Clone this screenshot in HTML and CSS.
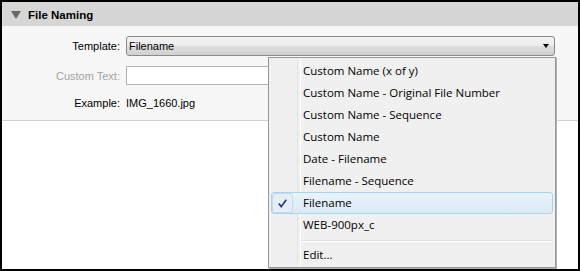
FILE: index.html
```html
<!DOCTYPE html>
<html lang="en">
<head>
  <meta charset="UTF-8">
  <title>File Naming</title>
  <link rel="stylesheet" href="styles.css">
</head>
<body>
  <div class="panel">
    <div class="panel-header">
      <span class="disclosure"></span>
      <span class="panel-title">File Naming</span>
    </div>

    <div class="panel-body">
      <div class="form-grid">
        <label class="field-label">Template:</label>
        <div class="select">
          <span>Filename</span>
          <span class="select-arrow"></span>
        </div>

        <label class="field-label disabled">Custom Text:</label>
        <div class="text-input"></div>

        <label class="field-label">Example:</label>
        <div class="example">IMG_1660.jpg</div>
      </div>
    </div>

    <div class="menu">
      <div class="menu-item">Custom Name (x of y)</div>
      <div class="menu-item">Custom Name - Original File Number</div>
      <div class="menu-item">Custom Name - Sequence</div>
      <div class="menu-item">Custom Name</div>
      <div class="menu-item">Date - Filename</div>
      <div class="menu-item">Filename - Sequence</div>
      <div class="menu-item checked">
        <span class="check-cell">
          <svg width="9" height="9" viewBox="0 0 9 9"><path d="M0.8 4.6 L3.2 7.6 L8.2 0.8" fill="none" stroke="#24348a" stroke-width="1.6"/></svg>
        </span>
        Filename
      </div>
      <div class="menu-item">WEB-900px_c</div>
      <div class="menu-separator"></div>
      <div class="menu-item">Edit...</div>
    </div>
  </div>
</body>
</html>
```

FILE: styles.css
```css
* {
  margin: 0;
  padding: 0;
  box-sizing: border-box;
}

body {
  font-family: 'Liberation Sans', Arial, sans-serif;
  font-size: 11px;
  color: #000;
  background: #fff;
}

.panel {
  position: relative;
  width: 580px;
  height: 271px;
  border: 2px solid #000;
  background: #fff;
}

.panel-header {
  height: 24px;
  background: #d6d6d6;
  display: flex;
  align-items: center;
  padding-left: 9px;
  gap: 7px;
}

.disclosure {
  width: 0;
  height: 0;
  border-left: 5px solid transparent;
  border-right: 5px solid transparent;
  border-top: 8px solid #6a6a6a;
  margin-top: 1px;
}

.panel-title {
  font-weight: bold;
  font-size: 11.5px;
  margin-top: 1px;
}

.panel-body {
  height: 95px;
  background: #f7f7f7;
  border-bottom: 1px solid #d2d2d2;
  padding: 10px 23px 0 0;
}

.form-grid {
  display: grid;
  grid-template-columns: 118px 1fr;
  grid-template-rows: 20px 19px 16px;
  column-gap: 6px;
  row-gap: 10px;
  align-items: center;
}

.field-label {
  text-align: right;
}

.field-label.disabled {
  color: #a3a3a3;
}

.select {
  height: 20px;
  border: 1px solid #8a8a8a;
  border-radius: 3px;
  background: linear-gradient(#f3f3f3, #ebebeb 50%, #dedede 50%, #d0d0d0);
  display: flex;
  align-items: center;
  justify-content: space-between;
  padding: 0 5px 0 2px;
}

.select-arrow {
  width: 0;
  height: 0;
  border-left: 3.5px solid transparent;
  border-right: 3.5px solid transparent;
  border-top: 4px solid #000;
}

.text-input {
  height: 19px;
  border: 1px solid #b5b5b5;
  background: #fff;
}

.menu {
  position: absolute;
  left: 266px;
  top: 55px;
  width: 288px;
  height: 211px;
  background: #f0f0f0;
  border: 1px solid #979797;
  box-shadow: 1px 1px 0 #b0b0b0;
  padding: 2px;
  font-family: 'Open Sans', 'Segoe UI', sans-serif;
  font-size: 11.5px;
}

.menu::before {
  content: '';
  position: absolute;
  left: 28px;
  top: 2px;
  bottom: 2px;
  width: 2px;
  border-left: 1px solid #e2e3e3;
  border-right: 1px solid #fff;
}

.menu-item {
  position: relative;
  height: 22px;
  line-height: 22px;
  padding-left: 31px;
  border: 1px solid transparent;
  border-radius: 3px;
  display: flex;
  align-items: center;
}

.menu-item.checked {
  background: linear-gradient(#eaf3fa, #d9e9f5);
  border-color: #aed1ea;
}

.check-cell {
  position: absolute;
  left: 0;
  top: 0;
  width: 21px;
  height: 20px;
  border: 1px solid #c4d9ea;
  border-radius: 3px;
  background: #e3eef7;
  display: flex;
  align-items: center;
  justify-content: center;
}

.menu-separator {
  height: 2px;
  margin: 4px 0 2px 30px;
  border-top: 1px solid #e0e0e0;
  border-bottom: 1px solid #fff;
}
```
